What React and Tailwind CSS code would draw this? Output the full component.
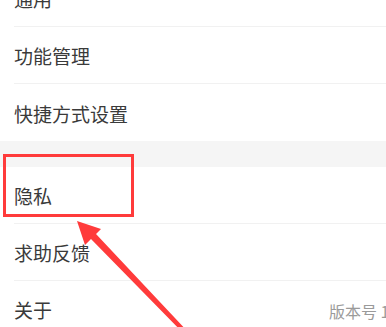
import React from 'react';

const groups = [
  ['通用', '功能管理', '快捷方式设置'],
  ['隐私', '求助反馈', '关于'],
];

function Row({ label, last, extra }) {
  return (
    <div className="h-[57px] pl-[14px] flex bg-white">
      <div
        className={`flex-1 flex items-center justify-between pt-[3px] pr-4 ${last ? '' : 'border-b border-[#f1f1f1]'}`}
      >
        <span className="text-[19px] text-[#3a3a3a]">{label}</span>
        {extra && <span className="text-[16px] text-[#9a9a9a] whitespace-nowrap">{extra}</span>}
      </div>
    </div>
  );
}

export default function App() {
  return (
    <div
      className="relative w-[386px] h-[327px] overflow-hidden bg-white"
      style={{ fontFamily: '"Noto Sans CJK SC", "Noto Sans", sans-serif' }}
    >
      <div className="w-[432px] -mt-[30px]">
        {groups.map((items, gi) => (
          <div key={gi}>
            {gi > 0 && <div className="h-[26px] bg-[#f5f5f5]" />}
            {items.map((label, i) => (
              <Row
                key={label}
                label={label}
                last={gi === 0 && i === items.length - 1}
                extra={label === '关于' ? '版本号 1.0.0' : null}
              />
            ))}
          </div>
        ))}
      </div>

      {/* annotation: red box */}
      <div className="absolute left-[3px] top-[154px] w-[131px] h-[63px] border-[3px] border-[#ff3b3b]" />

      {/* annotation: arrow */}
      <svg className="absolute inset-0" width="386" height="327" viewBox="0 0 386 327">
        <polygon
          points="77,221 101,229 96,234 190,334 187,337 91,239 85,245"
          fill="#ff3b3b"
        />
      </svg>
    </div>
  );
}
